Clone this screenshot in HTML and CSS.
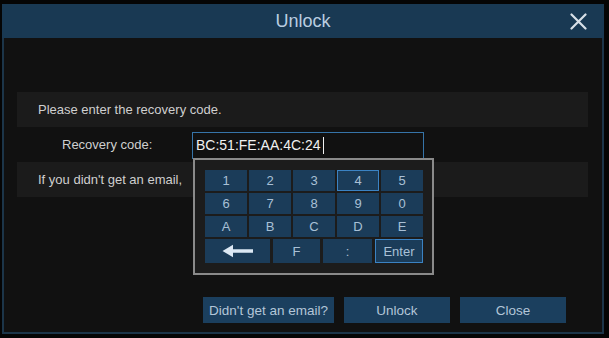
FILE: index.html
```html
<!DOCTYPE html>
<html lang="en">
<head>
    <meta charset="UTF-8">
    <meta name="viewport" content="width=device-width, initial-scale=1.0">
    <title>Unlock</title>
    <link rel="stylesheet" href="styles.css">
</head>
<body>
    <div class="dialog">
        <div class="titlebar">
            <span class="title">Unlock</span>
            <svg class="close" width="17" height="17" viewBox="0 0 17 17">
                <path d="M1.5 1.5 L15.5 15.5 M15.5 1.5 L1.5 15.5" stroke="#d8e0e8" stroke-width="2.2" stroke-linecap="round"/>
            </svg>
        </div>
        <div class="content">
            <div class="row band">
                <span class="text">Please enter the recovery code.</span>
            </div>
            <div class="row code-row">
                <span class="label">Recovery code:</span>
                <div class="input">BC:51:FE:AA:4C:24<span class="caret"></span></div>

                <div class="keyboard">
                    <div class="keys">
                        <div class="key">1</div>
                        <div class="key">2</div>
                        <div class="key">3</div>
                        <div class="key active">4</div>
                        <div class="key">5</div>
                        <div class="key">6</div>
                        <div class="key">7</div>
                        <div class="key">8</div>
                        <div class="key">9</div>
                        <div class="key">0</div>
                        <div class="key">A</div>
                        <div class="key">B</div>
                        <div class="key">C</div>
                        <div class="key">D</div>
                        <div class="key">E</div>
                    </div>
                    <div class="keys-last">
                        <div class="key">
                            <svg width="32" height="14" viewBox="0 0 32 14">
                                <path d="M0.5 7 L11 0.8 L11 5.2 L31 5.2 L31 8.8 L11 8.8 L11 13.2 Z" fill="#dce8f4"/>
                            </svg>
                        </div>
                        <div class="key">F</div>
                        <div class="key">:</div>
                        <div class="key active">Enter</div>
                    </div>
                </div>
            </div>
            <div class="row band">
                <span class="text">If you didn't get an email,</span>
            </div>

            <div class="buttons">
                <button class="btn wide">Didn't get an email?</button>
                <button class="btn">Unlock</button>
                <button class="btn">Close</button>
            </div>
        </div>
    </div>
</body>
</html>
```

FILE: styles.css
```css
body {
    margin: 0;
    background-color: #050505;
    font-family: "Liberation Sans", Arial, sans-serif;
}
.dialog {
    margin: 4px 0 0 2px;
    width: 602px;
    height: 330px;
    box-sizing: border-box;
    background: #111111;
    border: 2px solid #1c3549;
    border-top: none;
    display: flex;
    flex-direction: column;
}
.titlebar {
    height: 34px;
    margin: 0 -2px;
    background: #193953;
    display: flex;
    align-items: center;
    justify-content: center;
    position: relative;
}
.title {
    color: #b9cde0;
    font-size: 18px;
}
.close {
    position: absolute;
    right: 17px;
    top: 9px;
}
.content {
    padding: 54px 14px 0 13px;
    flex: 1;
    display: flex;
    flex-direction: column;
}
.row {
    height: 35px;
    display: flex;
    align-items: center;
    font-size: 13px;
    color: #cfcfcf;
    overflow: hidden;
}
.band {
    background: #1b1b1b;
}
.text {
    padding-left: 21px;
    white-space: nowrap;
}
.code-row {
    position: relative;
    overflow: visible;
}
.label {
    width: 130px;
    padding-left: 45px;
}
.input {
    margin-top: 1px;
    width: 232px;
    height: 27px;
    border: 1px solid #3674a8;
    background: #111111;
    color: #f0f0f0;
    font-size: 14px;
    display: flex;
    align-items: center;
    padding-left: 3px;
    box-sizing: border-box;
}
.caret {
    display: inline-block;
    width: 1px;
    height: 17px;
    background: #f0f0f0;
    margin-left: 2px;
}
.keyboard {
    position: absolute;
    left: 176px;
    top: 31px;
    width: 241px;
    height: 117px;
    box-sizing: border-box;
    border: 2px solid #8a8a8a;
    background: #1c1c1c;
    padding: 10px 10px 0 10px;
    z-index: 2;
}
.keys {
    display: grid;
    grid-template-columns: repeat(5, 42px);
    grid-template-rows: 21px 21px 21px;
    gap: 2px 2px;
}
.keys-last {
    margin-top: 2px;
    display: grid;
    grid-template-columns: 65px 47px 49px 48px;
    gap: 3px;
    height: 24px;
}
.key {
    background: #1b3c59;
    color: #a9c0d6;
    font-size: 13px;
    display: flex;
    align-items: center;
    justify-content: center;
    box-sizing: border-box;
}
.key.active {
    border: 1px solid #3b83c4;
}
.buttons {
    margin-top: 100px;
    display: flex;
    justify-content: flex-end;
    gap: 10px;
    padding-right: 22px;
}
.btn {
    width: 106px;
    height: 26px;
    border: none;
    background: #1b3f5e;
    color: #b3c6d8;
    font-family: "Liberation Sans", Arial, sans-serif;
    font-size: 13.5px;
    padding: 0;
}
.btn.wide {
    width: 131px;
}
```
